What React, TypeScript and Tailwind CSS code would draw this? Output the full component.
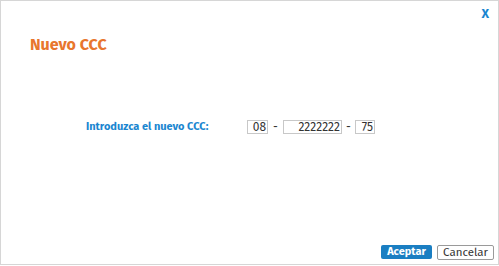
import React from "react";

export default function App() {
  const font = { fontFamily: '"Fira Sans", "Noto Sans", Roboto, sans-serif' };
  return (
    <div className="w-[499px] h-[265px] border border-[#d6d6d6] bg-white flex flex-col" style={font}>
      <div className="flex justify-end pr-[9px] pt-[6px] h-[20px]">
        <span className="text-[13px] font-bold text-[#1a86d0] leading-[14px]">X</span>
      </div>
      <div className="pl-[29px] pt-[14px] text-[16px] font-bold text-[#e8762d] leading-[20px]">Nuevo CCC</div>
      <div className="flex items-center pl-[85px] mt-[65px] h-[14px]">
        <span className="text-[11px] font-bold text-[#1a86d0] w-[161px] leading-[14px]">Introduzca el nuevo CCC:</span>
        <div className="w-[21px] h-[14px] border border-[#c8c8c8] text-[12px] text-[#333] leading-[12px] text-right pr-[1px]">08</div>
        <span className="w-[15px] text-center text-[12px] text-[#333]">-</span>
        <div className="w-[59px] h-[14px] border border-[#c8c8c8] text-[12px] text-[#333] leading-[12px] text-right pr-[1px]">2222222</div>
        <span className="w-[13px] text-center text-[12px] text-[#333]">-</span>
        <div className="w-[20px] h-[14px] border border-[#c8c8c8] text-[12px] text-[#333] leading-[12px] text-right pr-[1px]">75</div>
      </div>
      <div className="flex-1" />
      <div className="flex justify-end gap-[5px] pr-[4px] pb-[4px]">
        <button className="w-[51px] h-[14px] rounded-[2px] bg-[#1a7ec2] text-white text-[11px] font-bold leading-[14px]">Aceptar</button>
        <button className="w-[57px] h-[15px] rounded-[2px] border border-[#9a9a9a] bg-white text-[#333] text-[11.5px] leading-[13px]">Cancelar</button>
      </div>
    </div>
  );
}
